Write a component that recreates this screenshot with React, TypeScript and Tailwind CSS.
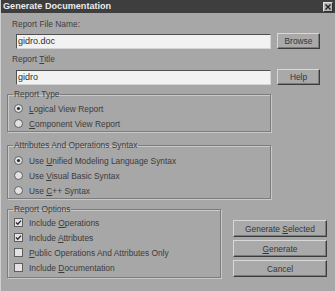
const font = { fontFamily: '"Liberation Sans", Arial, sans-serif' };

function Radio({ checked }: { checked?: boolean }) {
  return (
    <svg width="9" height="9" viewBox="0 0 9 9" className="shrink-0">
      <circle cx="4.5" cy="4.5" r="4" fill="#e2e2e2" stroke="#5e5e5e" strokeWidth="1" />
      {checked && <circle cx="4.5" cy="4.5" r="1.6" fill="#2e2e2e" />}
    </svg>
  );
}

function Check({ checked }: { checked?: boolean }) {
  return (
    <svg width="9" height="9" viewBox="0 0 9 9" className="shrink-0">
      <rect x="0.5" y="0.5" width="8" height="8" fill="#e2e2e2" stroke="#5e5e5e" strokeWidth="1" />
      {checked && <path d="M2 4.5 L3.8 6.3 L7 2.6" fill="none" stroke="#2e2e2e" strokeWidth="1.4" />}
    </svg>
  );
}

function Option({ children, radio, checked }: { children: React.ReactNode; radio?: boolean; checked?: boolean }) {
  return (
    <div className="flex h-[15px] items-center gap-[6px] pl-[6px]">
      {radio ? <Radio checked={checked} /> : <Check checked={checked} />}
      <span className="text-[8.4px] leading-[10px] text-[#3c3c3c]">{children}</span>
    </div>
  );
}

function Group({ title, className, children }: { title: string; className: string; children: React.ReactNode }) {
  return (
    <fieldset
      className={`border border-[#7c7c7c] px-0 shadow-[1px_1px_0_#c9c9c9,inset_1px_1px_0_#c9c9c9] ${className}`}
    >
      <legend className="ml-[5px] px-[1px] text-[8.4px] leading-[10px] text-[#3e3e3e]">{title}</legend>
      {children}
    </fieldset>
  );
}

function Button({ children, className }: { children: React.ReactNode; className: string }) {
  return (
    <button
      className={`flex items-center justify-center border border-t-[#d8d8d8] border-l-[#d8d8d8] border-b-[#3c3c3c] border-r-[#3c3c3c] bg-[#a9a9a9] text-[8.4px] leading-[10px] text-[#363636] shadow-[inset_-1px_-1px_0_#7a7a7a] ${className}`}
    >
      {children}
    </button>
  );
}

function Field({ value }: { value: string }) {
  return (
    <div className="flex h-[15px] w-[255px] items-center border border-t-[#505050] border-l-[#505050] border-b-[#d4d4d4] border-r-[#d4d4d4] bg-[#f2f2f2] pl-[1px] text-[9px] leading-[11px] text-[#303030]">
      {value}
    </div>
  );
}

export default function App() {
  return (
    <div style={font} className="h-[291px] w-[335px] overflow-hidden border-l border-l-[#cfcfcf] bg-[#a7a7a7]">
      <div className="flex h-[13px] items-center justify-between bg-[#3e3e3e] pl-[2px] pr-[2px]">
        <span className="text-[9.1px] font-bold leading-[11px] text-[#ececec]">Generate Documentation</span>
        <div className="flex h-[10px] w-[10px] items-center justify-center border border-t-[#e0e0e0] border-l-[#e0e0e0] border-b-[#303030] border-r-[#303030] bg-[#b5b5b5]">
          <svg width="6" height="6" viewBox="0 0 6 6">
            <path d="M0.5 0.5 L5.5 5.5 M5.5 0.5 L0.5 5.5" stroke="#222" strokeWidth="1.4" />
          </svg>
        </div>
      </div>

      <div className="mt-[6px] pl-[11px] text-[8.4px] leading-[10px] text-[#3e3e3e]">Report File Name:</div>
      <div className="mt-[4px] flex items-center pl-[15px]">
        <Field value="gidro.doc" />
        <Button className="ml-[6px] h-[16px] w-[43px]">Browse</Button>
      </div>

      <div className="mt-[5px] pl-[11px] text-[8.4px] leading-[10px] text-[#3e3e3e]">
        Report <u className="underline-offset-1">T</u>itle
      </div>
      <div className="mt-[5px] flex items-center pl-[15px]">
        <Field value="gidro" />
        <Button className="ml-[6px] h-[16px] w-[43px]">Help</Button>
      </div>

      <div className="pl-[6px]">
        <Group title="Report Type" className="mt-[4px] w-[264px] pb-0 pt-[2px]">
          <Option radio checked>
            <u className="underline-offset-1">L</u>ogical View Report
          </Option>
          <Option radio>
            <u className="underline-offset-1">C</u>omponent View Report
          </Option>
        </Group>

        <Group title="Attributes And Operations Syntax" className="mt-[8px] w-[264px] pb-0 pt-[3px]">
          <Option radio checked>
            Use <u className="underline-offset-1">U</u>nified Modeling Language Syntax
          </Option>
          <Option radio>
            Use <u className="underline-offset-1">V</u>isual Basic Syntax
          </Option>
          <Option radio>
            Use <u className="underline-offset-1">C</u>++ Syntax
          </Option>
        </Group>

        <div className="mt-[5px] flex items-start">
          <Group title="Report Options" className="w-[214px] pb-[2px] pt-[1px]">
            <Option checked>
              Include <u className="underline-offset-1">O</u>perations
            </Option>
            <Option checked>
              Include <u className="underline-offset-1">A</u>ttributes
            </Option>
            <Option>
              <u className="underline-offset-1">P</u>ublic Operations And Attributes Only
            </Option>
            <Option>
              Include <u className="underline-offset-1">D</u>ocumentation
            </Option>
          </Group>
          <div className="ml-[12px] mt-[16px] flex flex-col gap-[3px]">
            <Button className="h-[17px] w-[94px]">
              Generate&nbsp;<u className="underline-offset-1">S</u>elected
            </Button>
            <Button className="h-[17px] w-[94px]">
              <u className="underline-offset-1">G</u>enerate
            </Button>
            <Button className="h-[17px] w-[94px]">Cancel</Button>
          </div>
        </div>
      </div>
    </div>
  );
}
